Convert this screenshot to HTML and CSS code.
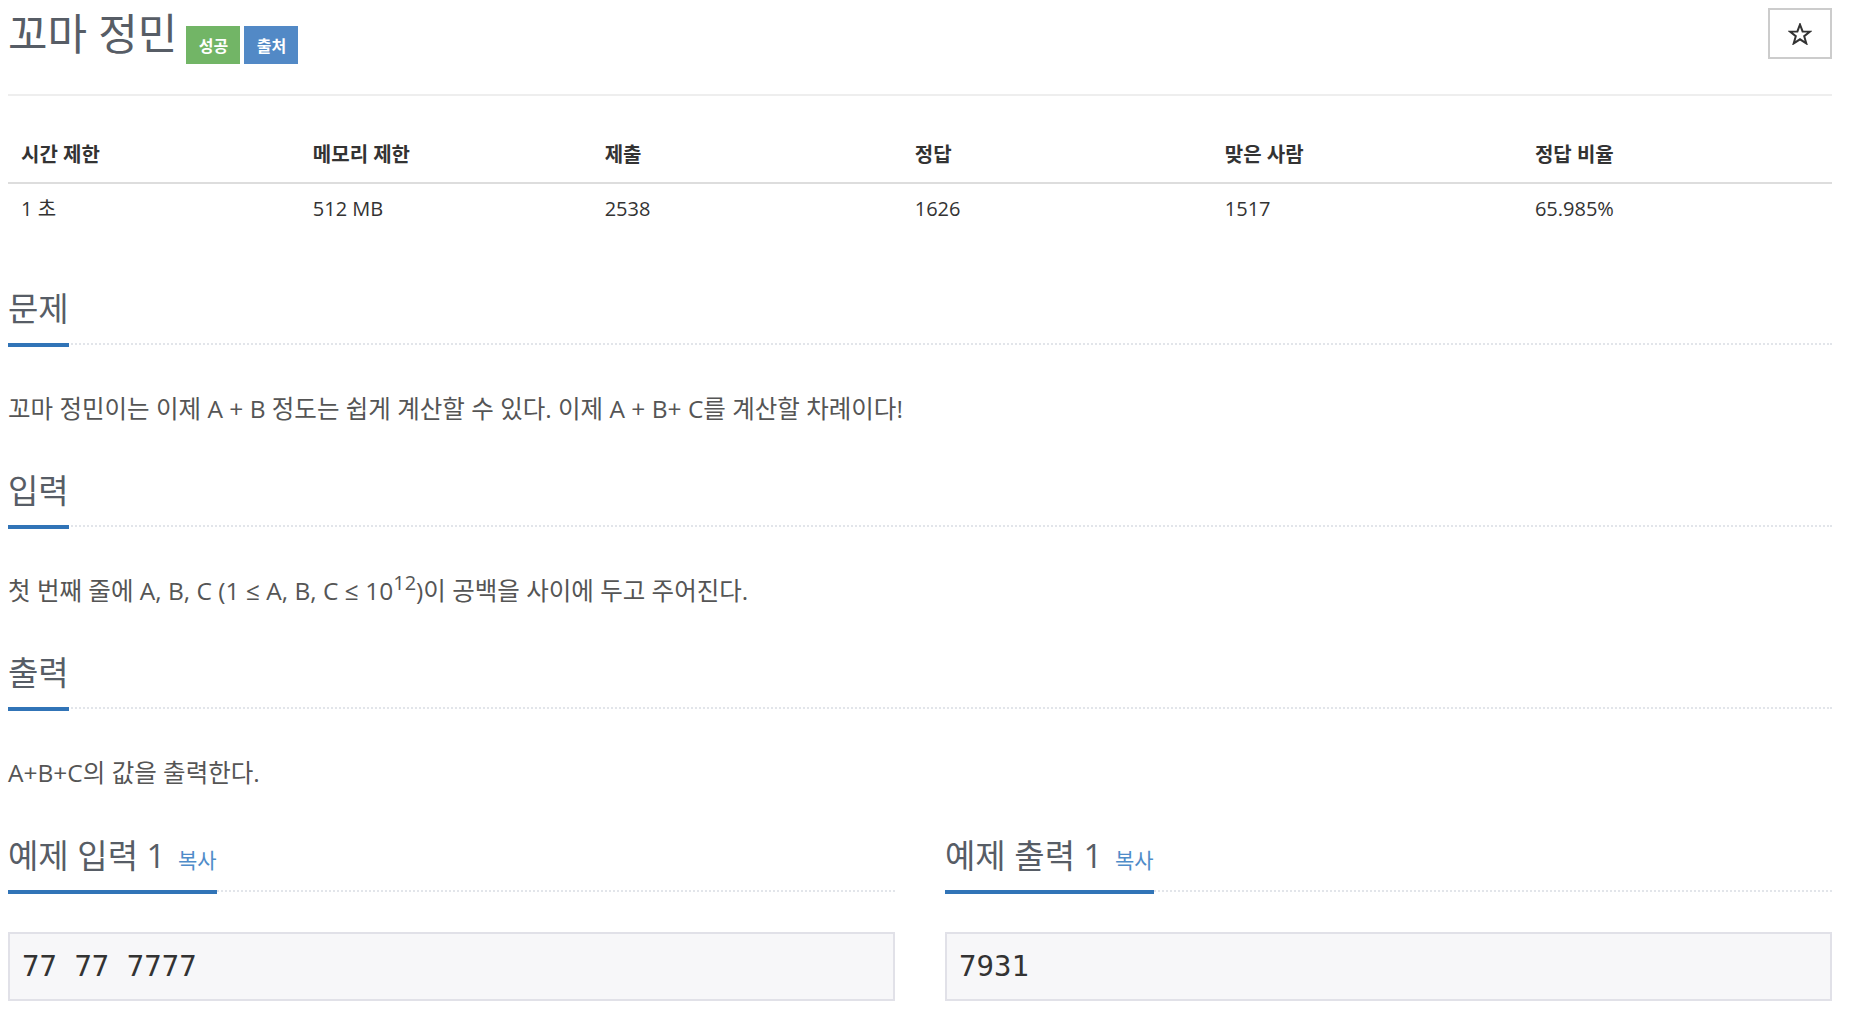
FILE: index.html
```html
<!DOCTYPE html>
<html lang="ko">
<head>
<meta charset="utf-8">
<title>꼬마 정민</title>
<link rel="stylesheet" href="styles.css">
</head>
<body>
<div class="page">
  <div class="page-header">
    <div class="title-wrap">
      <h1 class="title">꼬마 정민</h1>
      <div class="labels">
        <span class="label label-success">성공</span>
        <span class="label label-primary">출처</span>
      </div>
    </div>
    <button class="star-btn" type="button" aria-label="즐겨찾기">
      <svg width="24" height="22" viewBox="0 0 24 22"><polygon points="12,1.5 14.6,8.4 22,8.6 16.2,13.2 18.3,20.4 12,16.3 5.7,20.4 7.8,13.2 2,8.6 9.4,8.4" fill="none" stroke="#333" stroke-width="2" stroke-linejoin="miter"/></svg>
    </button>
  </div>

  <table class="info">
    <thead>
      <tr>
        <th class="c16">시간 제한</th>
        <th class="c16">메모리 제한</th>
        <th class="c17">제출</th>
        <th class="c17">정답</th>
        <th class="c17">맞은 사람</th>
        <th class="c17">정답 비율</th>
      </tr>
    </thead>
    <tbody>
      <tr>
        <td>1 초</td>
        <td>512 MB</td>
        <td>2538</td>
        <td>1626</td>
        <td>1517</td>
        <td>65.985%</td>
      </tr>
    </tbody>
  </table>

  <section class="section first">
    <div class="headline"><h2>문제</h2></div>
    <p class="text">꼬마 정민이는 이제 A + B 정도는 쉽게 계산할 수 있다. 이제 A + B+ C를 계산할 차례이다!</p>
  </section>

  <section class="section">
    <div class="headline"><h2>입력</h2></div>
    <p class="text">첫 번째 줄에 A, B, C (1 ≤ A, B, C ≤ 10<sup>12</sup>)이 공백을 사이에 두고 주어진다.</p>
  </section>

  <section class="section">
    <div class="headline"><h2>출력</h2></div>
    <p class="text">A+B+C의 값을 출력한다.</p>
  </section>

  <div class="samples">
    <section class="sample">
      <div class="headline"><h2>예제 입력 1 <a class="copy" href="#">복사</a></h2></div>
      <pre class="sample-data">77 77 7777</pre>
    </section>
    <section class="sample">
      <div class="headline"><h2>예제 출력 1 <a class="copy" href="#">복사</a></h2></div>
      <pre class="sample-data">7931</pre>
    </section>
  </div>
</div>
</body>
</html>
```
FILE: styles.css
```css
html, body {
  margin: 0;
  padding: 0;
  background: #fff;
}

body {
  padding: 8px 20px 0 8px;
  font-family: "Open Sans", "Noto Sans CJK KR", sans-serif;
  color: #555;
}

.page {
  width: 1824px;
}

/* header */
.page-header {
  display: flex;
  justify-content: space-between;
  align-items: flex-start;
  height: 86px;
  border-bottom: 2px solid #eee;
}

.title-wrap {
  display: flex;
  align-items: flex-start;
}

.title {
  margin: 3px 0 0 0;
  font-size: 43px;
  line-height: 46px;
  font-weight: 400;
  color: #575d66;
}

.labels {
  display: flex;
  gap: 4px;
  margin-top: 18px;
  margin-left: 9px;
}

.label {
  display: flex;
  align-items: center;
  justify-content: center;
  width: 54px;
  height: 38px;
  font-size: 16px;
  font-weight: 700;
  color: #fff;
}

.label-success { background: #72b566; }
.label-primary { background: #5289c6; }

.star-btn {
  width: 64px;
  height: 51px;
  margin: 0;
  padding: 0;
  border: 2px solid #ccc;
  background: #fff;
  display: flex;
  align-items: center;
  justify-content: center;
}

/* table */
.info {
  width: 100%;
  margin-top: 32px;
  border-collapse: collapse;
  font-size: 20px;
  color: #333;
}

.info th {
  text-align: left;
  font-weight: 700;
  line-height: 28px;
  padding: 13px 13px;
  border-bottom: 2px solid #ddd;
}

.info td {
  text-align: left;
  line-height: 28px;
  padding: 11px 13px;
}

.c16 { width: 16%; }
.c17 { width: 17%; }

/* sections */
.section {
  margin-top: 43px;
}

.section.first {
  margin-top: 55px;
}

.headline {
  display: flex;
  align-items: flex-end;
  border-bottom: 2px dotted #e2e5ea;
}

.headline h2 {
  margin: 0 0 -4px 0;
  padding-bottom: 14px;
  font-size: 33px;
  line-height: 40px;
  font-weight: 400;
  color: #575d66;
  border-bottom: 4px solid #3174b7;
}

.text {
  margin: 45px 0 0 0;
  font-size: 24.5px;
  line-height: 38px;
  color: #555;
}

.text sup {
  font-size: 20px;
  line-height: 0;
  vertical-align: 10px;
}

/* samples */
.samples {
  display: grid;
  grid-template-columns: 1fr 1fr;
  column-gap: 50px;
  margin-top: 44px;
}

.copy {
  font-size: 21px;
  line-height: 20px;
  color: #4f8cc9;
  text-decoration: none;
  margin-left: 4px;
}

.sample-data {
  margin: 40px 0 0 0;
  padding: 13px 12px;
  border: 2px solid #e1e1e8;
  background: #f7f7f9;
  font-family: "DejaVu Sans Mono", monospace;
  font-size: 29px;
  line-height: 39px;
  color: #333;
}
```
